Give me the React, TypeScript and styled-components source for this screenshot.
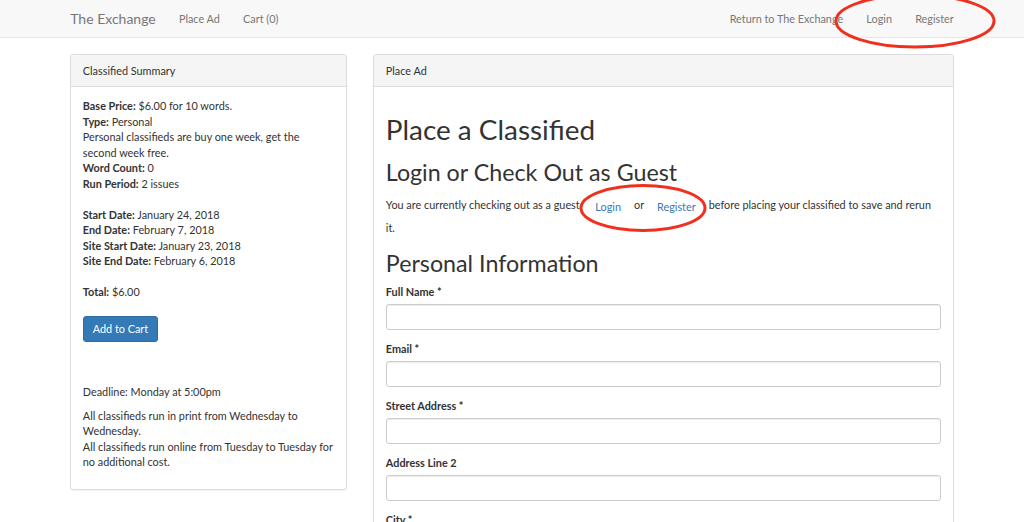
import React from "react";
import styled, { createGlobalStyle } from "styled-components";

const GlobalStyle = createGlobalStyle`
  html, body {
    margin: 0;
    padding: 0;
    overflow: hidden;
    background: #fff;
  }
  body {
    font-family: Lato, "Open Sans", "Liberation Sans", sans-serif;
    font-size: 10.85px;
    line-height: 15.5px;
    color: #333;
  }
  * { box-sizing: border-box; }
`;

const Page = styled.div`
  position: relative;
  height: 522px;
  overflow: hidden;
`;

const Navbar = styled.nav`
  height: 38px;
  background: #f8f8f8;
  border-bottom: 1px solid #e7e7e7;
  margin-bottom: 16px;
`;

const Container = styled.div`
  width: 906.75px;
  margin: 0 auto;
  padding: 0 11.6px;
`;

const NavInner = styled(Container)`
  display: flex;
  align-items: center;
  height: 100%;
`;

const Brand = styled.a`
  font-size: 14px;
  color: #777;
  text-decoration: none;
  margin-right: 11.6px;
`;

const NavGroup = styled.div<{ $right?: boolean }>`
  display: flex;
  margin-left: ${(p) => (p.$right ? "auto" : "0")};
  margin-right: ${(p) => (p.$right ? "-11.6px" : "0")};
`;

const NavLink = styled.a`
  color: #777;
  text-decoration: none;
  padding: 0 11.6px;
  line-height: 37px;
`;

const Row = styled.div`
  display: grid;
  grid-template-columns: 277px 1fr;
  column-gap: 26px;
  align-items: start;
`;

const Panel = styled.div`
  background: #fff;
  border: 1px solid #ddd;
  border-radius: 3px;
  box-shadow: 0 1px 1px rgba(0, 0, 0, 0.05);
  margin-bottom: 15.5px;
`;

const PanelHeading = styled.div`
  background: #f5f5f5;
  border-bottom: 1px solid #ddd;
  padding: 7.5px 11.6px;
  border-radius: 3px 3px 0 0;
`;

const PanelBody = styled.div`
  padding: 11.6px;
`;

const Para = styled.p<{ $gap?: number }>`
  margin: 0 0 ${(p) => (p.$gap ?? 7.75)}px;
`;

const Block = styled.div<{ $gap?: number }>`
  margin-bottom: ${(p) => (p.$gap ?? 0)}px;
`;

const Button = styled.button`
  font-family: inherit;
  font-size: 10.85px;
  line-height: 15.5px;
  color: #fff;
  background: #337ab7;
  border: 1px solid #2e6da4;
  border-radius: 3px;
  padding: 4.65px 9px;
  margin: 0 0 42px;
  display: block;
`;

const LinkButton = styled.a`
  display: inline-block;
  color: #337ab7;
  padding: 4.65px 9.3px;
  border: 1px solid transparent;
  text-decoration: none;
  vertical-align: middle;
`;

const H1 = styled.h1`
  font-size: 27.9px;
  font-weight: 400;
  line-height: 1.1;
  margin: 15.5px 0 7.75px;
`;

const H2 = styled.h2`
  font-size: 23.25px;
  font-weight: 400;
  line-height: 1.1;
  margin: 15.5px 0 7.75px;
`;

const FormGroup = styled.div`
  margin-bottom: 11.6px;
`;

const Label = styled.label`
  display: block;
  font-weight: 700;
  margin-bottom: 3.9px;
`;

const Input = styled.input`
  display: block;
  width: 100%;
  height: 26px;
  border: 1px solid #ccc;
  border-radius: 3px;
  box-shadow: inset 0 1px 1px rgba(0, 0, 0, 0.075);
  font-family: inherit;
  font-size: 10.85px;
  padding: 4.65px 9.3px;
`;

const Annotation = styled.svg`
  position: absolute;
  left: 0;
  top: 0;
  pointer-events: none;
`;

const fields = ["Full Name *", "Email *", "Street Address *", "Address Line 2", "City *"];

export default function App() {
  return (
    <Page>
      <GlobalStyle />
      <Navbar>
        <NavInner>
          <Brand href="#">The Exchange</Brand>
          <NavGroup>
            <NavLink href="#">Place Ad</NavLink>
            <NavLink href="#">Cart (0)</NavLink>
          </NavGroup>
          <NavGroup $right>
            <NavLink href="#">Return to The Exchange</NavLink>
            <NavLink href="#">Login</NavLink>
            <NavLink href="#">Register</NavLink>
          </NavGroup>
        </NavInner>
      </Navbar>
      <Container>
        <Row>
          <Panel>
            <PanelHeading>Classified Summary</PanelHeading>
            <PanelBody>
              <Block $gap={15.5}>
                <b>Base Price:</b> $6.00 for 10 words.
                <br />
                <b>Type:</b> Personal
                <br />
                Personal classifieds are buy one week, get the second week free.
                <br />
                <b>Word Count:</b> 0
                <br />
                <b>Run Period:</b> 2 issues
              </Block>
              <Block $gap={15.5}>
                <b>Start Date:</b> January 24, 2018
                <br />
                <b>End Date:</b> February 7, 2018
                <br />
                <b>Site Start Date:</b> January 23, 2018
                <br />
                <b>Site End Date:</b> February 6, 2018
              </Block>
              <Block $gap={16}>
                <b>Total:</b> $6.00
              </Block>
              <Button>Add to Cart</Button>
              <Para>Deadline: Monday at 5:00pm</Para>
              <Para>
                All classifieds run in print from Wednesday to Wednesday.
                <br />
                All classifieds run online from Tuesday to Tuesday for no additional cost.
              </Para>
            </PanelBody>
          </Panel>
          <Panel>
            <PanelHeading>Place Ad</PanelHeading>
            <PanelBody>
              <H1>Place a Classified</H1>
              <H2>Login or Check Out as Guest</H2>
              <Para>
                You are currently checking out as a guest. <LinkButton href="#">Login</LinkButton> or{" "}
                <LinkButton href="#">Register</LinkButton> before placing your classified to save and
                rerun it.
              </Para>
              <H2>Personal Information</H2>
              {fields.map((label) => (
                <FormGroup key={label}>
                  <Label>{label}</Label>
                  <Input type="text" />
                </FormGroup>
              ))}
            </PanelBody>
          </Panel>
        </Row>
      </Container>
      <Annotation width="1024" height="522" viewBox="0 0 1024 522">
        <ellipse cx="915" cy="21" rx="79" ry="26" fill="none" stroke="#f0301e" strokeWidth="3" />
        <ellipse cx="643" cy="208" rx="62" ry="22.5" fill="none" stroke="#f0301e" strokeWidth="3" />
      </Annotation>
    </Page>
  );
}
